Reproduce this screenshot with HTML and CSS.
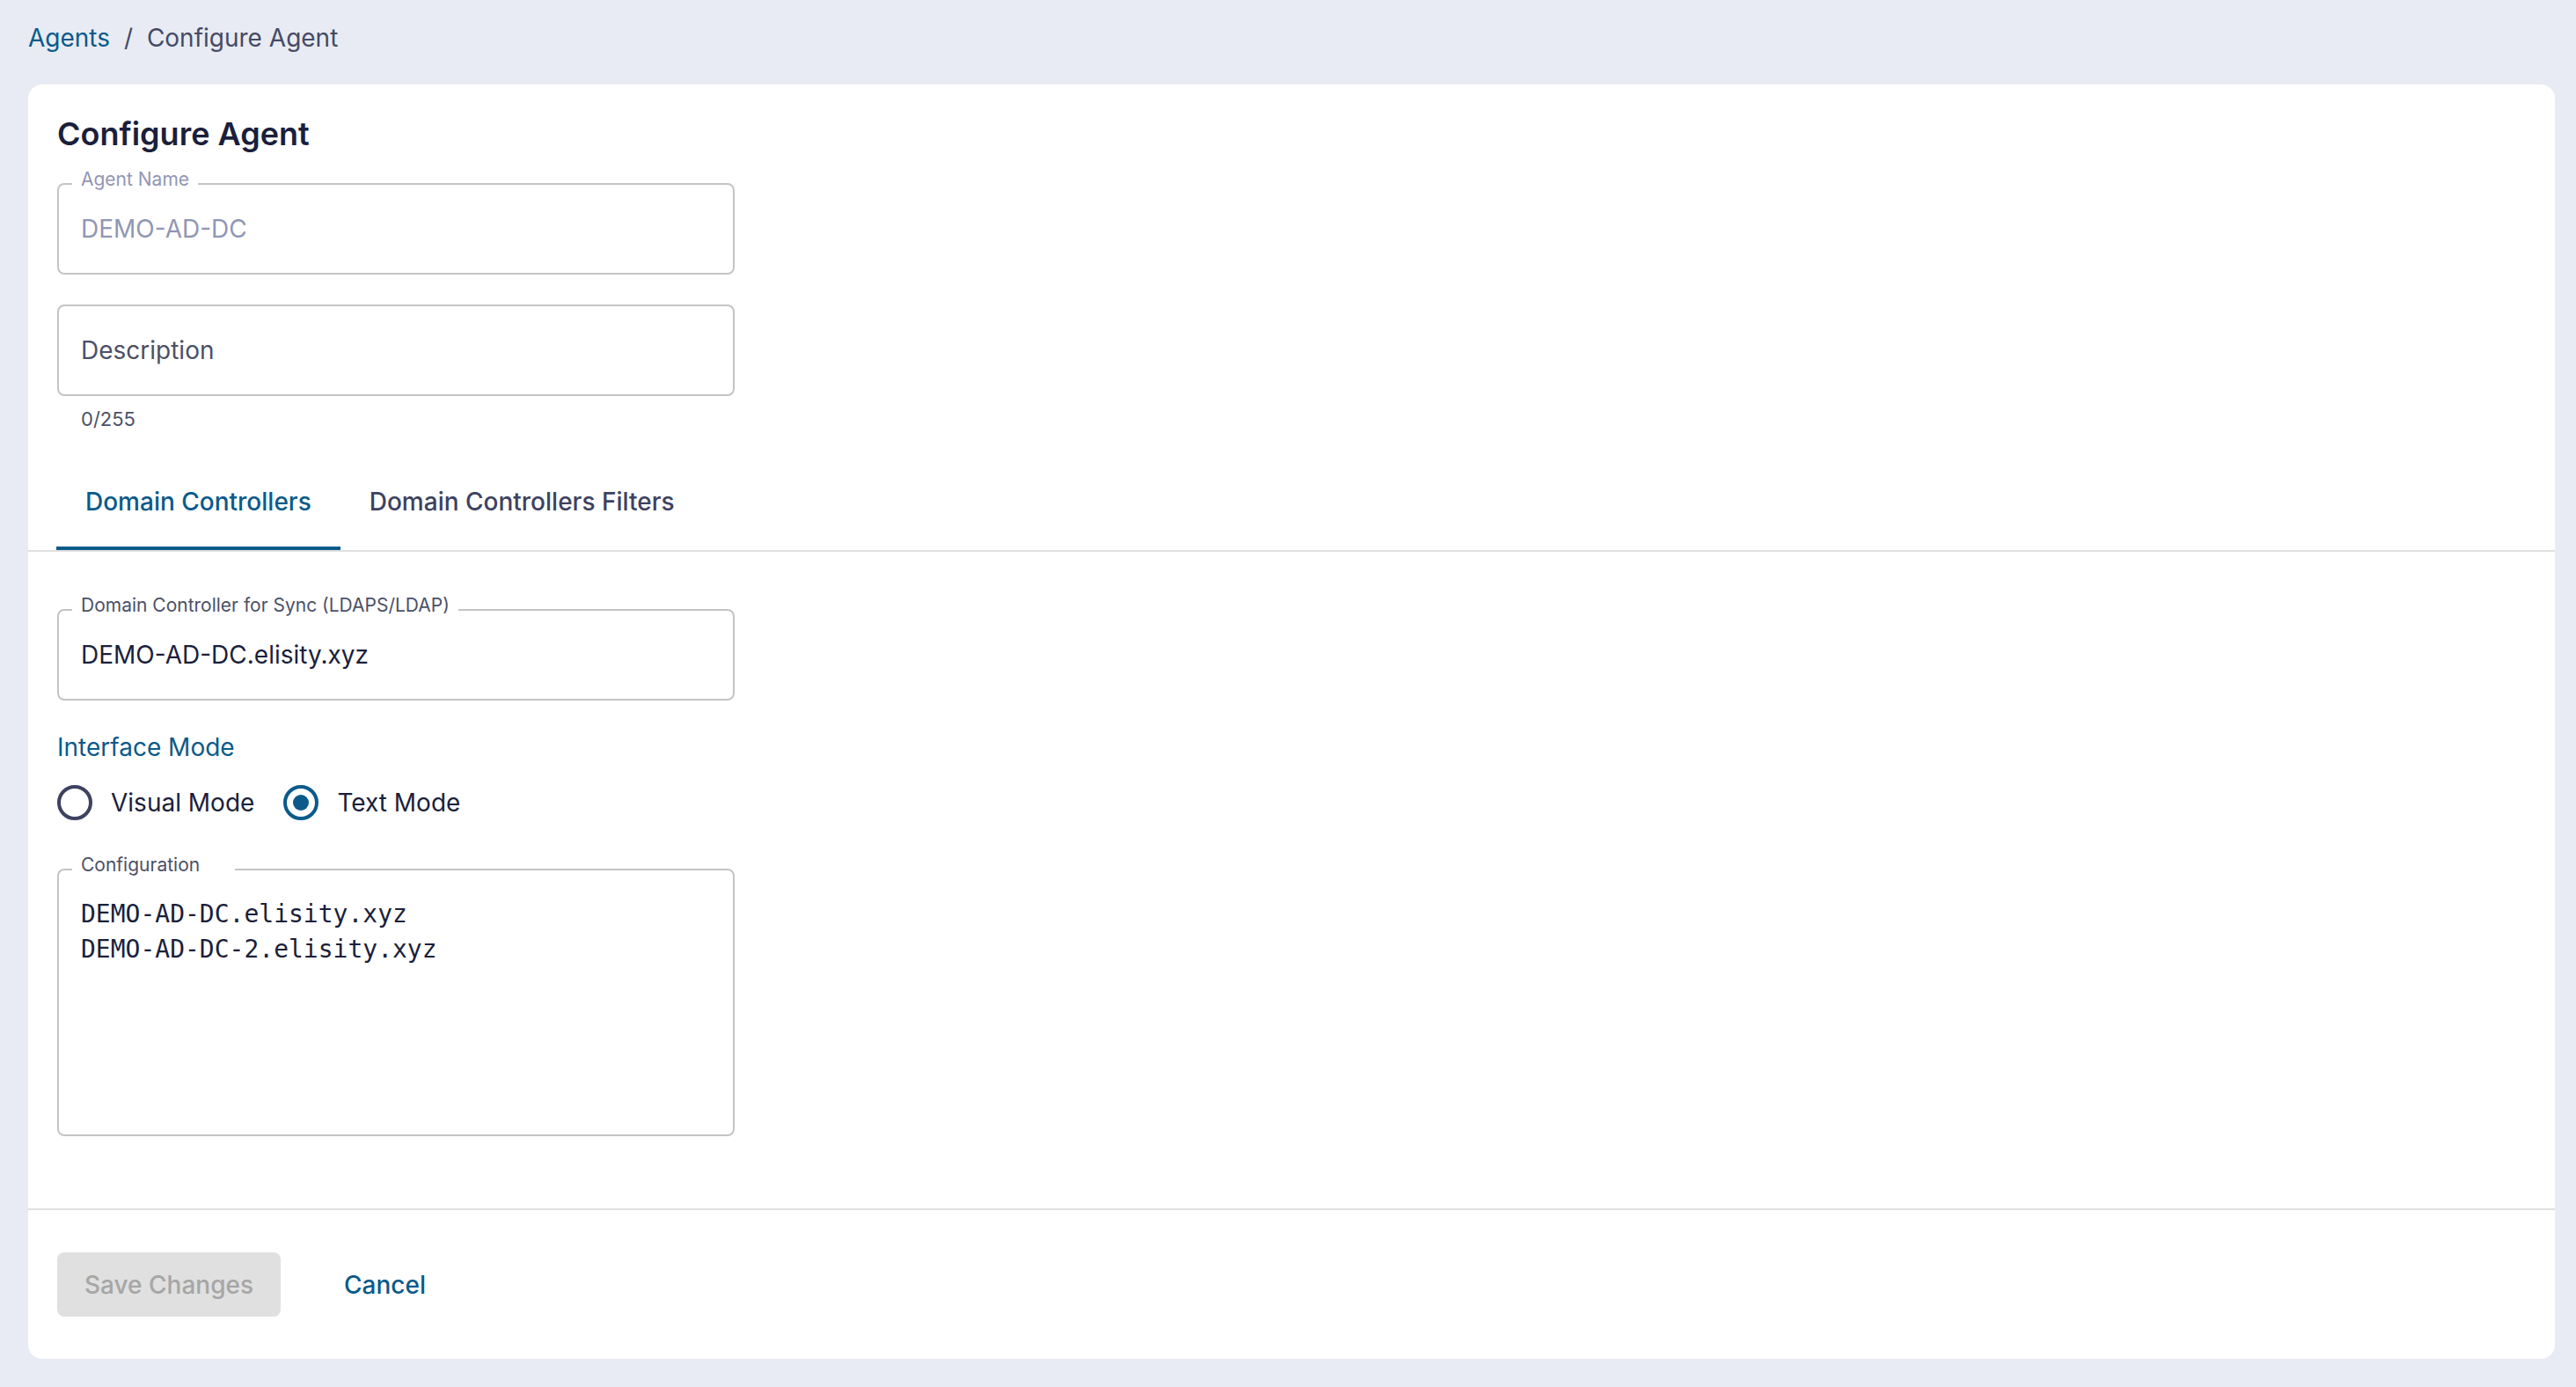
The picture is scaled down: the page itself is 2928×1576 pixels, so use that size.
FILE: index.html
```html
<!DOCTYPE html>
<html lang="en">
<head>
  <meta charset="UTF-8" />
  <meta name="viewport" content="width=device-width, initial-scale=1.0" />
  <title>Configure Agent</title>
  <link rel="stylesheet" href="styles.css">
</head>
<body>
  <div class="page">
    <nav class="breadcrumb">
      <a href="#">Agents</a>
      <span class="sep">/</span>
      <span class="current">Configure Agent</span>
    </nav>

    <div class="card">
      <div class="card-head">
        <h1>Configure Agent</h1>

        <div class="field field-disabled">
          <span class="field-label">Agent Name</span>
          <span class="field-value">DEMO-AD-DC</span>
        </div>

        <div class="field">
          <span class="field-placeholder">Description</span>
        </div>
        <div class="helper">0/255</div>
      </div>

      <!-- Tabs -->
      <div class="tabs">
        <div class="tab active">Domain Controllers</div>
        <div class="tab">Domain Controllers Filters</div>
      </div>

      <div class="card-body">
        <div class="field">
          <span class="field-label">Domain Controller for Sync (LDAPS/LDAP)</span>
          <span class="field-value">DEMO-AD-DC.elisity.xyz</span>
        </div>

        <div class="section-title">Interface Mode</div>
        <div class="radios">
          <label class="radio-option"><span class="radio"></span>Visual Mode</label>
          <label class="radio-option"><span class="radio checked"></span>Text Mode</label>
        </div>

        <div class="field field-area">
          <span class="field-label wide-notch">Configuration</span>
          <div class="code">DEMO-AD-DC.elisity.xyz
DEMO-AD-DC-2.elisity.xyz</div>
        </div>
      </div>

      <!-- Footer -->
      <div class="card-footer">
        <button class="btn-save" disabled>Save Changes</button>
        <button class="btn-cancel">Cancel</button>
      </div>
    </div>
  </div>
</body>
</html>
```

FILE: styles.css
```css
* { margin: 0; padding: 0; box-sizing: border-box; }
body, html { height: 100%; font-family: 'Inter', 'Liberation Sans', sans-serif; }

body {
  background-color: #e8ebf3;
  color: #1b1f3b;
}

.page {
  padding: 23px 24px 0 32px;
}

/* BREADCRUMB */
.breadcrumb {
  font-size: 28px;
  line-height: 40px;
  margin-bottom: 33px;
  color: #454a66;
}

.breadcrumb a {
  color: #0b5a8a;
  text-decoration: none;
}

.breadcrumb .sep {
  margin: 0 8px;
}

/* CARD */
.card {
  background-color: #ffffff;
  border-radius: 16px;
}

.card-head {
  padding: 34px 33px 0;
}

h1 {
  font-size: 36px;
  line-height: 44px;
  font-weight: 600;
  color: #1b1f3b;
  margin-bottom: 34px;
}

/* FIELDS */
.field {
  position: relative;
  width: 770px;
  height: 104px;
  border: 2px solid #c4c4c4;
  border-radius: 8px;
  padding: 0 25px;
  display: flex;
  align-items: center;
  font-size: 28px;
  line-height: 40px;
}

.field + .field {
  margin-top: 34px;
}

.field-label {
  position: absolute;
  top: -19px;
  left: 15px;
  padding: 0 10px;
  background-color: #ffffff;
  font-size: 21px;
  line-height: 26px;
  color: #4b5068;
  white-space: nowrap;
}

.field-label.wide-notch {
  padding-right: 40px;
}

.field-value {
  color: #1b1f3b;
}

.field-placeholder {
  color: #4b5068;
}

.field-disabled .field-label,
.field-disabled .field-value {
  color: #9196b4;
}

.helper {
  margin-top: 10px;
  padding-left: 27px;
  font-size: 22px;
  line-height: 32px;
  color: #4b5068;
}

/* TABS */
.tabs {
  display: flex;
  margin-top: 23px;
  padding-left: 32px;
  border-bottom: 2px solid #e0e0e0;
}

.tab {
  position: relative;
  padding: 35px 33px;
  font-size: 28px;
  line-height: 40px;
  font-weight: 500;
  color: #3d4260;
  cursor: pointer;
}

.tab.active {
  color: #0b5a8a;
}

.tab.active::after {
  content: '';
  position: absolute;
  left: 0; right: 0; bottom: 0;
  height: 4px;
  background-color: #0b5a8a;
}

/* BODY */
.card-body {
  padding: 65px 33px 82px;
}

.section-title {
  margin-top: 33px;
  font-size: 28px;
  line-height: 40px;
  color: #0b5a8a;
}

.radios {
  display: flex;
  gap: 33px;
  margin-top: 23px;
}

.radio-option {
  display: flex;
  align-items: center;
  gap: 21px;
  height: 40px;
  font-size: 28px;
  color: #1b1f3b;
  cursor: pointer;
}

.radio {
  width: 40px;
  height: 40px;
  border: 4px solid #3d4260;
  border-radius: 50%;
  display: flex;
  justify-content: center;
  align-items: center;
}

.radio.checked {
  border-color: #0b5a8a;
}

.radio.checked::after {
  content: '';
  width: 18px;
  height: 18px;
  border-radius: 50%;
  background-color: #0b5a8a;
}

.field-area {
  margin-top: 55px;
  height: 304px;
  align-items: flex-start;
  padding-top: 30px;
}

.code {
  font-family: 'DejaVu Sans Mono', 'Liberation Mono', monospace;
  font-size: 28px;
  line-height: 40px;
  white-space: pre;
  color: #1b1f3b;
}

/* FOOTER */
.card-footer {
  display: flex;
  align-items: center;
  gap: 41px;
  padding: 48px 33px;
  border-top: 2px solid #e0e0e0;
}

.card-footer button {
  height: 73px;
  padding: 0 31px;
  border: none;
  border-radius: 8px;
  font-family: inherit;
  font-size: 28px;
  font-weight: 500;
  cursor: pointer;
}

.btn-save {
  background-color: #e0e0e0;
  color: #a6a6a6;
}

.btn-save:disabled {
  cursor: default;
}

.btn-cancel {
  background: none;
  color: #0b5a8a;
}
```
